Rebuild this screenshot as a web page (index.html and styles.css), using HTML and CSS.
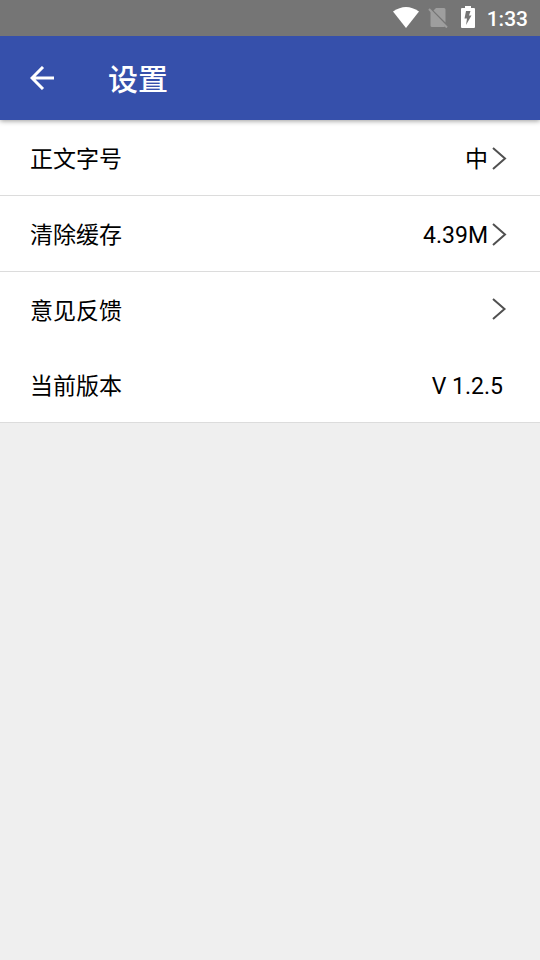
FILE: index.html
```html
<!DOCTYPE html>
<html lang="zh-CN">
<head>
<meta charset="utf-8">
<meta name="viewport" content="width=device-width, initial-scale=1">
<title>设置</title>
<link rel="stylesheet" href="styles.css">
</head>
<body>
<div class="status">
  <svg class="wifi" viewBox="0 0 26 22" aria-hidden="true"><path d="M0 5.500Q13-3.500 26 5.500L13 22Z"/></svg>
  <svg class="sim" viewBox="0 0 20 22" aria-hidden="true"><path class="sim-card" d="M8 2H16Q17.500 2 17.500 3.500V16.500L5.500 4.500ZM2.500 5L17 20Q16.500 21 16 21H4Q2.500 21 2.500 19.500Z"/><path class="sim-slash" d="M1 3L19 21.500"/></svg>
  <svg class="battery" viewBox="0 0 14 22" aria-hidden="true"><path class="battery-case" d="M4 0H10V2H13Q14 2 14 3V21Q14 22 13 22H1Q0 22 0 21V3Q0 2 1 2H4Z"/><path class="battery-bolt" d="M5 5H9.500L8 9.500H10.500L5 19L6 12.500H3.500Z"/></svg>
  <span class="time">1:33</span>
</div>
<header class="bar">
  <button class="back" type="button" aria-label="返回">
    <svg class="arrow" viewBox="0 0 24 24" aria-hidden="true"><path d="M24 12H2M13 1L2 12L13 23"/></svg>
  </button>
  <h1 class="title">设置</h1>
</header>
<main class="list">
  <button class="row ruled" type="button">
    <span class="label">正文字号</span><span class="value">中</span>
    <svg class="chevron" viewBox="0 0 16 22" aria-hidden="true"><path d="M2 1L14 11.500L2 22"/></svg>
  </button>
  <button class="row ruled" type="button">
    <span class="label">清除缓存</span><span class="value">4.39M</span>
    <svg class="chevron" viewBox="0 0 16 22" aria-hidden="true"><path d="M2 1L14 11.500L2 22"/></svg>
  </button>
  <button class="row" type="button">
    <span class="label">意见反馈</span>
    <svg class="chevron" viewBox="0 0 16 22" aria-hidden="true"><path d="M2 0L13.500 10L2 20"/></svg>
  </button>
  <div class="row ruled version">
    <span class="label">当前版本</span><span class="value">V 1.2.5</span>
  </div>
</main>
</body>
</html>
```
FILE: styles.css
```css
* {
  box-sizing: border-box;
}

body {
  margin: 0;
  background: #efefef;
  color: #000;
  font-family: Roboto, "Noto Sans CJK SC", sans-serif;
}

button {
  border: 0;
  color: inherit;
  font: inherit;
  text-align: left;
  cursor: pointer;
}

.status {
  position: relative;
  z-index: 2;
  display: flex;
  align-items: flex-start;
  justify-content: flex-end;
  height: 36px;
  padding: 6px 12px 0 0;
  background: #757575;
  color: #fff;
}

.wifi {
  width: 26px;
  height: 22px;
  margin-right: 9px;
  fill: #fff;
}

.sim {
  width: 20px;
  height: 22px;
  margin-right: 13px;
}

.sim-card {
  fill: #9e9e9e;
}

.sim-slash {
  fill: none;
  stroke: #9e9e9e;
  stroke-width: 2;
}

.battery {
  width: 14px;
  height: 22px;
  margin-right: 12px;
}

.battery-case {
  fill: #fff;
}

.battery-bolt {
  fill: #757575;
}

.time {
  font-size: 21px;
  font-weight: 500;
  line-height: 26px;
}

.bar {
  position: relative;
  display: flex;
  align-items: center;
  height: 84px;
  background: #3650ab;
  color: #fff;
  box-shadow: 0 1px 5px rgba(0, 0, 0, 0.4);
}

.back {
  display: flex;
  align-items: center;
  width: 84px;
  height: 84px;
  padding: 0 30px;
  background: transparent;
}

.arrow {
  width: 24px;
  height: 24px;
  fill: none;
  stroke: #fff;
  stroke-width: 3;
}

.title {
  margin: 0 0 0 24px;
  padding-top: 4px;
  font-size: 30px;
  font-weight: 500;
  line-height: 40px;
}

.list {
  display: flex;
  flex-direction: column;
}

.row {
  display: flex;
  align-items: center;
  box-sizing: content-box;
  height: 75px;
  padding: 0 33px 0 30px;
  background: #fff;
  font-size: 23px;
  line-height: 34px;
}

.ruled {
  border-bottom: 1px solid #dcdcdc;
}

.version {
  padding-right: 37px;
}

.label {
  flex: 1;
}

.label,
.value {
  padding-top: 4px;
}

.chevron {
  width: 16px;
  height: 22px;
  margin-left: 3px;
  overflow: visible;
  fill: none;
  stroke: #505050;
  stroke-width: 2;
}
```
